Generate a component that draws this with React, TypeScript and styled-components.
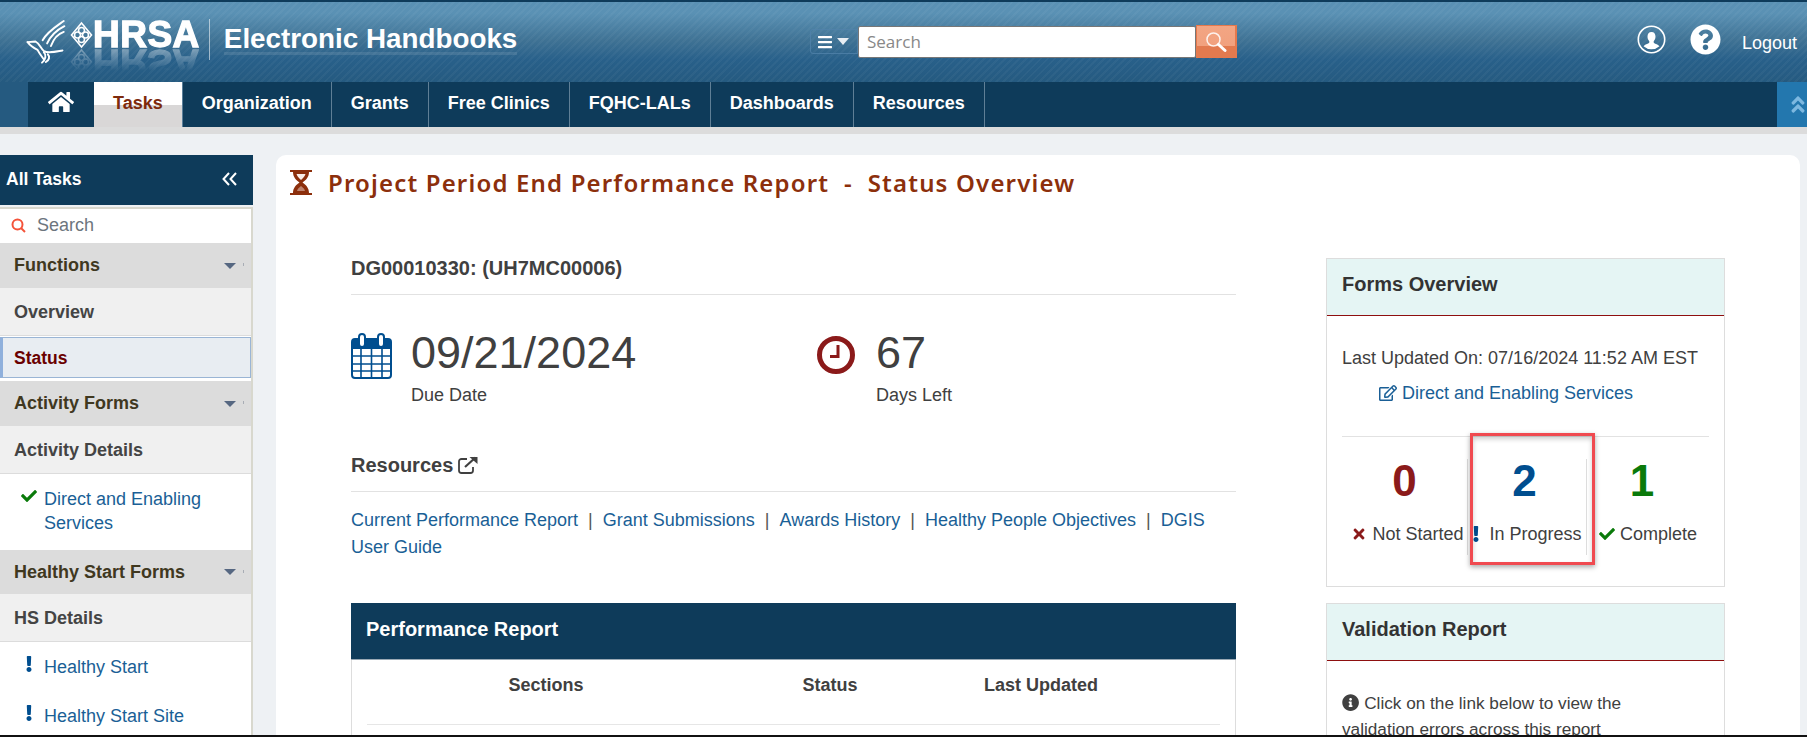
import React from "react";
import styled, { createGlobalStyle } from "styled-components";
import {
  FaHome,
  FaBars,
  FaQuestionCircle,
  FaAngleDoubleUp,
  FaCheck,
  FaTimes,
  FaExclamation,
  FaRegEdit,
  FaInfoCircle,
} from "react-icons/fa";

const navy = "#0e3b5a";
const linkBlue = "#1a5f96";

const GlobalStyle = createGlobalStyle`
  html, body {
    margin: 0;
    padding: 0;
    background: #eef1f4;
    font-family: "Liberation Sans", Arial, sans-serif;
    color: #404040;
  }
  * { box-sizing: border-box; }
`;

const Page = styled.div`
  width: 100%;
  height: 737px;
  display: flex;
  flex-direction: column;
  overflow: hidden;
  border-bottom: 2px solid #111;
`;

const Header = styled.header`
  flex: none;
  height: 82px;
  border-top: 2px solid ${navy};
  display: flex;
  align-items: flex-start;
  background:
    repeating-linear-gradient(135deg, rgba(255, 255, 255, 0.035) 0 2px, transparent 2px 5px),
    linear-gradient(#5a91b4 0, #5a91b4 14%, #3f7294 48%, #28608a 72%, #255a80 100%);
`;

const Brand = styled.div`
  width: 810px;
  height: 80px;
  padding: 16px 0 0 26px;
  display: flex;
  align-items: flex-start;
`;

const Eagle = styled.svg`
  width: 40px;
  height: 47px;
  flex: none;
`;

const LogoMark = styled.div`
  margin-left: 4px;
  margin-top: 2px;
  height: 30px;
  display: flex;
  align-items: center;
  -webkit-box-reflect: below -3px linear-gradient(transparent 20%, rgba(255, 255, 255, 0.4));
`;

const Diamond = styled.svg`
  width: 23px;
  height: 28px;
  flex: none;
`;

const LogoText = styled.span`
  color: #fff;
  font-size: 37px;
  line-height: 30px;
  font-weight: 700;
  letter-spacing: 0.5px;
  -webkit-text-stroke: 1.3px #fff;
`;

const BrandDivider = styled.div`
  width: 1px;
  height: 41px;
  margin: 1px 14px 0 9px;
  background: rgba(255, 255, 255, 0.55);
`;

const BrandName = styled.div`
  color: #fff;
  font-size: 27.8px;
  font-weight: 700;
  line-height: 27px;
  margin-top: 7px;
  white-space: nowrap;
  border-bottom: 3px solid rgba(255, 255, 255, 0.1);
`;

const SearchGroup = styled.div`
  display: flex;
  align-items: center;
  height: 33px;
  margin-top: 23px;
`;

const MenuButton = styled.div`
  width: 48px;
  height: 25px;
  display: flex;
  align-items: center;
  gap: 4px;
  padding-left: 6px;
  color: #fff;
  font-size: 16px;
  border: 1px solid rgba(80, 130, 170, 0.8);
  border-radius: 3px 0 0 3px;
`;

const Caret = styled.span`
  width: 0;
  height: 0;
  border-left: 6px solid transparent;
  border-right: 6px solid transparent;
  border-top: 7px solid #e8eef3;
`;

const SearchInput = styled.div`
  width: 338px;
  height: 32px;
  background: #fff;
  border: 1px solid #777;
  border-radius: 2px;
  color: #888;
  font-family: "Open Sans", sans-serif;
  font-size: 17px;
  line-height: 30px;
  padding-left: 8px;
`;

const SearchButton = styled.div`
  width: 41px;
  height: 33px;
  display: flex;
  align-items: center;
  justify-content: center;
  border: 4px solid #e5794d;
  border-width: 1px 2px 1px 1px;
  background: linear-gradient(#f3a583 0, #f1a17e 65%, #e27a4f 66%, #e27a4f 100%);
`;

const Account = styled.div`
  margin-left: auto;
  margin-top: 22px;
  padding-right: 10px;
  display: flex;
  align-items: center;
  color: #fff;
`;

const HelpIcon = styled(FaQuestionCircle)`
  font-size: 31px;
  margin: 0 21px 0 24px;
`;

const Logout = styled.span`
  font-size: 18px;
  margin-top: 7px;
`;

const NavBar = styled.nav`
  flex: none;
  height: 52px;
  padding-left: 28px;
  background: #255a80;
  border-bottom: 7px solid #dcdcdc;
`;

const NavInner = styled.ul`
  margin: 0;
  padding: 0;
  list-style: none;
  height: 45px;
  display: flex;
  background: ${navy};
`;

const NavItem = styled.li<{ $active?: boolean }>`
  height: 45px;
  padding: 0 19px 2px;
  display: flex;
  align-items: center;
  font-size: 18px;
  font-weight: 700;
  color: ${(p) => (p.$active ? "#7e2a0c" : "#fff")};
  background: ${(p) => (p.$active ? "linear-gradient(#fff 0, #fff 51%, #d9d7d7 51%)" : "transparent")};
  border-right: 1px solid ${(p) => (p.$active ? "#5a7f9a" : "#5f7f96")};
`;

const HomeItem = styled.li`
  width: 66px;
  height: 45px;
  display: flex;
  justify-content: center;
  padding-top: 7px;
  color: #fff;
  font-size: 26px;
`;

const NavSpacer = styled.li`
  flex: 1;
`;

const CollapseTab = styled.li`
  width: 30px;
  height: 45px;
  background: #2377ae;
  color: #7db8e0;
  font-size: 21px;
  display: flex;
  align-items: center;
  padding-left: 12px;
  overflow: hidden;
`;

const Workspace = styled.div`
  flex: 1;
  min-height: 0;
  display: flex;
  padding-top: 21px;
  background: #eef1f4;
`;

const Sidebar = styled.aside`
  flex: none;
  width: 253px;
  overflow: hidden;
`;

const SidebarHead = styled.div`
  height: 50px;
  background: ${navy};
  color: #fff;
  font-size: 17.5px;
  font-weight: 700;
  display: flex;
  align-items: center;
  justify-content: space-between;
  padding: 0 16px 2px 6px;
`;

const SidebarBody = styled.div`
  margin-top: 2px;
  border-right: 2px solid #d8d8ce;
  border-top: 2px solid #d8d8ce;
  background: #fff;
  height: 600px;
`;

const SideSearch = styled.div`
  height: 34px;
  display: flex;
  align-items: center;
  gap: 11px;
  padding: 0 0 1px 11px;
  color: #6c757d;
  font-size: 18px;
`;

const SectionRow = styled.div<{ $tight?: boolean }>`
  height: ${(p) => (p.$tight ? 44 : 45)}px;
  background: #dcdcdc;
  color: #40381f;
  font-size: 18px;
  font-weight: 700;
  display: flex;
  align-items: center;
  padding-left: 14px;
  position: relative;
  &::before {
    content: "";
    position: absolute;
    right: 7px;
    top: 20px;
    width: 1px;
    height: 3px;
    background: #a8adb5;
  }
  &::after {
    content: "";
    margin-left: auto;
    margin-right: 15px;
    border-left: 6px solid transparent;
    border-right: 6px solid transparent;
    border-top: 6px solid #566781;
  }
`;

const ItemRow = styled.div`
  height: 48px;
  padding: 2px 0 0 14px;
  background: #f0f0f0;
  border-bottom: 1px solid #dcdcdc;
  color: #444;
  font-size: 18px;
  font-weight: 700;
  display: flex;
  align-items: center;
`;

const ActiveRow = styled.div`
  height: 41px;
  margin: 1px 0 3px;
  padding: 2px 0 0 11px;
  background: #e8edf2;
  border: 1px solid #9ab5d5;
  border-left: 3px solid #8fb0dc;
  color: #6a0000;
  font-size: 17.5px;
  font-weight: 700;
  display: flex;
  align-items: center;
`;

const LinkRow = styled.div<{ $height: number }>`
  height: ${(p) => p.$height}px;
  display: grid;
  grid-template-columns: 44px 1fr;
  padding: 13px 30px 0 0;
  color: ${linkBlue};
  font-size: 18px;
  line-height: 24px;
`;

const RowMark = styled.span<{ $color: string }>`
  color: ${(p) => p.$color};
  font-size: 16px;
  padding-left: 21px;
`;

const Card = styled.main`
  flex: 1;
  margin: 0 7px 0 23px;
  background: #fff;
  border-radius: 10px 10px 0 0;
  overflow: hidden;
`;

const TitleBar = styled.div`
  height: 103px;
  padding: 14px 0 0 14px;
  display: flex;
  align-items: flex-start;
  gap: 16px;
`;

const PageTitle = styled.h1`
  margin: 0;
  color: #8c2f0c;
  font-family: "Noto Sans", sans-serif;
  font-size: 24px;
  line-height: 27px;
  font-weight: 600;
  letter-spacing: 1.17px;
  white-space: pre;
`;

const Columns = styled.div`
  display: flex;
  gap: 90px;
  padding-left: 75px;
`;

const LeftColumn = styled.div`
  flex: none;
  width: 885px;
`;

const RightColumn = styled.div`
  flex: none;
  width: 399px;
  display: flex;
  flex-direction: column;
  gap: 16px;
`;

const SectionHeading = styled.div<{ $top?: number }>`
  margin-top: ${(p) => p.$top ?? 0}px;
  color: #404040;
  font-size: 20px;
  line-height: 20px;
  font-weight: 700;
  padding-bottom: 16px;
  border-bottom: 1px solid #e2e2e2;
  display: flex;
  align-items: center;
  gap: 5px;
`;

const Stats = styled.div`
  display: flex;
  margin-top: 35px;
`;

const Stat = styled.div<{ $width: number }>`
  width: ${(p) => p.$width}px;
  display: flex;
  gap: 19px;
`;

const StatIcon = styled.svg`
  width: 41px;
  height: 46px;
  margin-top: 3px;
`;

const StatValue = styled.div`
  font-size: 45px;
  line-height: 45px;
`;

const StatLabel = styled.div`
  margin-top: 8px;
  font-size: 18px;
  line-height: 24px;
`;

const LinkList = styled.div`
  margin-top: 15px;
  font-size: 18px;
  line-height: 27px;
  color: #555;
`;

const TextLink = styled.a`
  color: ${linkBlue};
  text-decoration: none;
`;

const Pipe = styled.span`
  margin: 0 5px;
`;

const TableHead = styled.div`
  margin-top: 42px;
  height: 57px;
  background: ${navy};
  color: #fff;
  font-size: 20px;
  font-weight: 700;
  line-height: 52px;
  padding-left: 15px;
  border-bottom: 1px solid #9aa9b5;
`;

const TableBody = styled.div`
  border: 1px solid #ddd;
  border-top: 0;
  padding: 0 15px;
  height: 80px;
`;

const ColumnRow = styled.div`
  height: 65px;
  padding-top: 13px;
  display: grid;
  grid-template-columns: 358px 210px 212px 1fr;
  text-align: center;
  font-size: 18px;
  line-height: 24px;
  font-weight: 700;
  border-bottom: 1px solid #e6e6e6;
`;

const Panel = styled.section<{ $height: number }>`
  height: ${(p) => p.$height}px;
  border: 1px solid #ddd;
`;

const PanelHead = styled.div`
  height: 57px;
  background: #e5f5f4;
  border-bottom: 1px solid #8e0f0f;
  color: #333;
  font-size: 20px;
  font-weight: 700;
  line-height: 50px;
  padding-left: 15px;
`;

const PanelBody = styled.div`
  padding: 30px 15px 0;
  font-size: 18px;
  line-height: 24px;
`;

const PanelLink = styled.a`
  display: flex;
  align-items: center;
  gap: 5px;
  margin: 11px 0 0 37px;
  color: ${linkBlue};
  text-decoration: none;
  white-space: nowrap;
`;

const Counters = styled.div`
  position: relative;
  margin-top: 31px;
  border-top: 1px solid #e2e2e2;
  padding-top: 22px;
  display: grid;
  grid-template-columns: 125px 119px 1fr;
`;

const Counter = styled.div<{ $divider?: boolean }>`
  height: 96px;
  text-align: center;
  border-left: ${(p) => (p.$divider ? "1px solid #ddd" : "0")};
`;

const CounterValue = styled.div<{ $color: string; $inset?: number }>`
  color: ${(p) => p.$color};
  font-size: 44px;
  font-weight: 700;
  line-height: 44px;
  padding-right: ${(p) => p.$inset ?? 0}px;
`;

const CounterLabel = styled.div<{ $color: string; $left?: number; $right?: number }>`
  margin-top: 19px;
  padding-left: ${(p) => p.$left ?? 0}px;
  padding-right: ${(p) => p.$right ?? 0}px;
  white-space: nowrap;
  display: flex;
  justify-content: center;
  align-items: center;
  gap: 5px;
  svg {
    color: ${(p) => p.$color};
    font-size: 16px;
  }
`;

const Highlight = styled.div`
  position: absolute;
  left: 128px;
  top: -4px;
  width: 125px;
  height: 132px;
  border: 3px solid #f04a50;
  box-shadow: 0 2px 5px rgba(0, 0, 0, 0.35), inset 0 3px 5px rgba(0, 0, 0, 0.2);
  pointer-events: none;
`;

const InfoText = styled.p`
  margin: -1px 0 0;
  width: 330px;
  font-size: 17.2px;
  line-height: 26px;
  svg {
    vertical-align: -2px;
    margin-right: 5px;
  }
`;

const EagleMark = () => (
  <Eagle viewBox="0 0 125 140" fill="none" stroke="#fff" strokeWidth="6" strokeLinecap="round" strokeLinejoin="round">
    <path d="M118 6C96 22 68 38 52 66" />
    <path d="M120 22C100 32 78 50 66 76" />
    <path d="M118 40C100 46 86 62 78 84" />
    <path d="M5 72L30 70C42 76 46 92 56 100C70 108 92 102 114 98" />
    <path d="M5 72C14 84 24 90 36 96C42 108 50 118 56 126" />
    <path d="M56 104C64 112 62 126 50 136M68 110C76 118 72 128 62 134" />
  </Eagle>
);

const DiamondMark = () => (
  <Diamond viewBox="0 0 23 28" fill="none" stroke="#fff" strokeWidth="1.6">
    <path d="M11.5 2L21.5 14L11.5 26L1.5 14Z" />
    <circle cx="11.5" cy="9.5" r="3" />
    <circle cx="11.5" cy="18.5" r="3" />
    <circle cx="7.5" cy="14" r="3" />
    <circle cx="15.5" cy="14" r="3" />
  </Diamond>
);

const UserIcon = () => (
  <svg width="29" height="29" viewBox="0 0 29 29" fill="none">
    <circle cx="14.5" cy="14.5" r="13.2" stroke="#fff" strokeWidth="1.6" />
    <path
      d="M14.5 7c2.7 0 4 2 4 4.6 0 2-.8 3.6-1.8 4.6v1.4c0 1 3.8 1.6 5.8 3.6a12 12 0 0 1-16 0c2-2 5.800-2.600 5.800-3.600v-1.400c-1-1-1.800-2.600-1.800-4.600C10.500 9 11.800 7 14.500 7z"
      fill="#fff"
    />
  </svg>
);

const Hourglass = () => (
  <svg width="22" height="25" viewBox="0 0 22 25" style={{ flex: "none", marginTop: 1 }}>
    <path d="M0 0h22v2H0zM0 23h22v2H0z" fill="#8c2f0c" />
    <path d="M3 2h16c0 5-3 8-6.500 10.500C16 15 19 18 19 23H3c0-5 3-8 6.500-10.500C6 10 3 7 3 2z" fill="#8c2f0c" />
    <path d="M6.500 4h9c-.6 2-2.200 4-4.500 6-2.300-2-3.900-4-4.500-6z" fill="#fbeee8" />
    <path d="M11 16c-2 1.500-3.500 3-4 5h8c-.5-2-2-3.500-4-5z" fill="#fbeee8" opacity="0.45" />
  </svg>
);

const CalendarIcon = () => (
  <StatIcon viewBox="0 0 41 46" fill="none">
    <rect x="1" y="6" width="39" height="39" rx="3" fill="#fff" stroke="#004e8f" strokeWidth="2" />
    <path d="M1 9a3 3 0 0 1 3-3h33a3 3 0 0 1 3 3v7H1z" fill="#004e8f" />
    <rect x="8" y="1" width="6" height="13" rx="3" fill="#fff" stroke="#004e8f" strokeWidth="2" />
    <rect x="27" y="1" width="6" height="13" rx="3" fill="#fff" stroke="#004e8f" strokeWidth="2" />
    <path d="M10 16v28M20.500 16v28M31 16v28M1 23h39M1 31h39M1 38h39" stroke="#004e8f" strokeWidth="1.600" />
  </StatIcon>
);

const ClockIcon = () => (
  <StatIcon viewBox="0 0 41 46" fill="none">
    <circle cx="20" cy="22" r="16.500" stroke="#8b1a1a" strokeWidth="5" />
    <path d="M22 12v11.500h-8" stroke="#8b1a1a" strokeWidth="3" />
  </StatIcon>
);

const ExternalIcon = () => (
  <svg width="20" height="18" viewBox="0 0 20 18" fill="none" stroke="#404040" strokeWidth="1.800">
    <path d="M15 11v3.500a2.500 2.500 0 0 1-2.500 2.500H3.500A2.500 2.500 0 0 1 1 14.500v-9A2.500 2.500 0 0 1 3.500 3H9" />
    <path d="M7 11L17.500 1.500" strokeWidth="2.200" />
    <path d="M11.500 1h8v7z" fill="#404040" stroke="none" />
  </svg>
);

const CollapseIcon = () => (
  <svg width="15" height="14" viewBox="0 0 15 14" fill="none" stroke="#fff" strokeWidth="2">
    <path d="M7 1L1.500 7L7 13M14 1L8.500 7L14 13" />
  </svg>
);

const resourceLinks = [
  "Current Performance Report",
  "Grant Submissions",
  "Awards History",
  "Healthy People Objectives",
  "DGIS User Guide",
];

const navLinks = ["Organization", "Grants", "Free Clinics", "FQHC-LALs", "Dashboards", "Resources"];

const App: React.FC = () => {
  return (
    <Page>
      <GlobalStyle />
      <Header>
        <Brand>
          <EagleMark />
          <LogoMark>
            <DiamondMark />
            <LogoText>HRSA</LogoText>
          </LogoMark>
          <BrandDivider />
          <BrandName>Electronic Handbooks</BrandName>
        </Brand>
        <SearchGroup>
          <MenuButton>
            <FaBars />
            <Caret />
          </MenuButton>
          <SearchInput>Search</SearchInput>
          <SearchButton>
            <svg width="22" height="22" viewBox="0 0 22 22" fill="none" stroke="#fff">
              <circle cx="8.500" cy="8.500" r="6.500" strokeWidth="1.500" opacity="0.85" />
              <path d="M13.500 13.500L20 19.500" strokeWidth="3" strokeLinecap="round" />
            </svg>
          </SearchButton>
        </SearchGroup>
        <Account>
          <UserIcon />
          <HelpIcon />
          <Logout>Logout</Logout>
        </Account>
      </Header>

      <NavBar>
        <NavInner>
          <HomeItem>
            <FaHome />
          </HomeItem>
          <NavItem $active>Tasks</NavItem>
          {navLinks.map((label) => (
            <NavItem key={label}>{label}</NavItem>
          ))}
          <NavSpacer />
          <CollapseTab>
            <FaAngleDoubleUp />
          </CollapseTab>
        </NavInner>
      </NavBar>

      <Workspace>
        <Sidebar>
          <SidebarHead>
            All Tasks
            <CollapseIcon />
          </SidebarHead>
          <SidebarBody>
            <SideSearch>
              <svg width="15" height="15" viewBox="0 0 15 15" fill="none" stroke="#f4533a" strokeWidth="2">
                <circle cx="6.500" cy="6.500" r="5" />
                <path d="M10 10l4 4" />
              </svg>
              Search
            </SideSearch>
            <SectionRow>Functions</SectionRow>
            <ItemRow>Overview</ItemRow>
            <ActiveRow>Status</ActiveRow>
            <SectionRow>Activity Forms</SectionRow>
            <ItemRow>Activity Details</ItemRow>
            <LinkRow $height={76}>
              <RowMark $color="#0a7a0a">
                <FaCheck />
              </RowMark>
              <span>Direct and Enabling Services</span>
            </LinkRow>
            <SectionRow $tight>Healthy Start Forms</SectionRow>
            <ItemRow>HS Details</ItemRow>
            <LinkRow $height={49}>
              <RowMark $color="#004e8f">
                <FaExclamation />
              </RowMark>
              <span>Healthy Start</span>
            </LinkRow>
            <LinkRow $height={49}>
              <RowMark $color="#004e8f">
                <FaExclamation />
              </RowMark>
              <span>Healthy Start Site</span>
            </LinkRow>
          </SidebarBody>
        </Sidebar>

        <Card>
          <TitleBar>
            <Hourglass />
            <PageTitle>Project Period End Performance Report  -  Status Overview</PageTitle>
          </TitleBar>
          <Columns>
            <LeftColumn>
              <SectionHeading>DG00010330: (UH7MC00006)</SectionHeading>
              <Stats>
                <Stat $width={465}>
                  <CalendarIcon />
                  <div>
                    <StatValue>09/21/2024</StatValue>
                    <StatLabel>Due Date</StatLabel>
                  </div>
                </Stat>
                <Stat $width={300}>
                  <ClockIcon />
                  <div>
                    <StatValue>67</StatValue>
                    <StatLabel>Days Left</StatLabel>
                  </div>
                </Stat>
              </Stats>
              <SectionHeading $top={48}>
                Resources <ExternalIcon />
              </SectionHeading>
              <LinkList>
                {resourceLinks.map((label, index) => (
                  <React.Fragment key={label}>
                    <TextLink href="#">{label}</TextLink>
                    {index < resourceLinks.length - 1 && <Pipe> | </Pipe>}
                  </React.Fragment>
                ))}
              </LinkList>
              <TableHead>Performance Report</TableHead>
              <TableBody>
                <ColumnRow>
                  <span>Sections</span>
                  <span>Status</span>
                  <span>Last Updated</span>
                </ColumnRow>
              </TableBody>
            </LeftColumn>

            <RightColumn>
              <Panel $height={329}>
                <PanelHead>Forms Overview</PanelHead>
                <PanelBody>
                  Last Updated On: 07/16/2024 11:52 AM EST
                  <PanelLink href="#">
                    <FaRegEdit />
                    Direct and Enabling Services
                  </PanelLink>
                  <Counters>
                    <Counter>
                      <CounterValue $color="#8b1a1a">0</CounterValue>
                      <CounterLabel $color="#8b1a1a" $left={6}>
                        <FaTimes />
                        Not Started
                      </CounterLabel>
                    </Counter>
                    <Counter $divider>
                      <CounterValue $color="#004e8f" $inset={5}>
                        2
                      </CounterValue>
                      <CounterLabel $color="#004e8f" $right={4}>
                        <FaExclamation />
                        In Progress
                      </CounterLabel>
                    </Counter>
                    <Counter $divider>
                      <CounterValue $color="#0a7a0a" $inset={12}>
                        1
                      </CounterValue>
                      <CounterLabel $color="#0a7a0a">
                        <FaCheck />
                        Complete
                      </CounterLabel>
                    </Counter>
                    <Highlight />
                  </Counters>
                </PanelBody>
              </Panel>
              <Panel $height={200}>
                <PanelHead>Validation Report</PanelHead>
                <PanelBody>
                  <InfoText>
                    <FaInfoCircle />
                    Click on the link below to view the validation errors across this report
                  </InfoText>
                </PanelBody>
              </Panel>
            </RightColumn>
          </Columns>
        </Card>
      </Workspace>
    </Page>
  );
};

export default App;
